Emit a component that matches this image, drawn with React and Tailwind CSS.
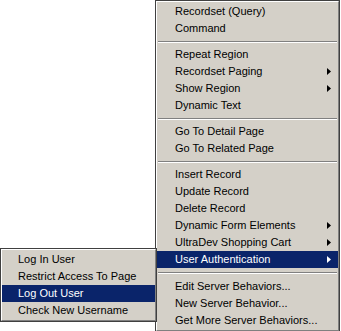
const mainGroups = [
  [{ label: 'Recordset (Query)' }, { label: 'Command' }],
  [
    { label: 'Repeat Region' },
    { label: 'Recordset Paging', sub: true },
    { label: 'Show Region', sub: true },
    { label: 'Dynamic Text' },
  ],
  [{ label: 'Go To Detail Page' }, { label: 'Go To Related Page' }],
  [
    { label: 'Insert Record' },
    { label: 'Update Record' },
    { label: 'Delete Record' },
    { label: 'Dynamic Form Elements', sub: true },
    { label: 'UltraDev Shopping Cart', sub: true },
    { label: 'User Authentication', sub: true, active: true },
  ],
  [
    { label: 'Edit Server Behaviors...' },
    { label: 'New Server Behavior...' },
    { label: 'Get More Server Behaviors...' },
  ],
]

const authItems = [
  { label: 'Log In User' },
  { label: 'Restrict Access To Page' },
  { label: 'Log Out User', active: true },
  { label: 'Check New Username' },
]

function Arrow({ active }) {
  return (
    <svg width="4" height="7" viewBox="0 0 4 7" className="shrink-0">
      <path d="M0 0 L4 3.5 L0 7 Z" fill={active ? '#ffffff' : '#000000'} />
    </svg>
  )
}

function Item({ item, pad }) {
  return (
    <div
      className={`flex h-[17px] items-center pr-[7px] ${pad} ${item.active ? 'bg-[#0a246a] text-white' : 'text-black'}`}
    >
      <span className="flex-1 whitespace-nowrap">{item.label}</span>
      {item.sub && <Arrow active={item.active} />}
    </div>
  )
}

function Separator({ h }) {
  return (
    <div className={`flex ${h} flex-col justify-center px-px`}>
      <div className="h-px bg-[#808080]" />
      <div className="h-px bg-white" />
    </div>
  )
}

export default function App() {
  return (
    <div
      className="relative h-[331px] w-[341px] overflow-hidden bg-white text-[11px] leading-none"
      style={{ fontFamily: '"Liberation Sans", Arial, sans-serif' }}
    >
      <div className="ml-[155px] w-[185px] border border-[#404040] bg-[#d4d0c8]">
        <div className="border-t border-l border-white border-r border-b border-r-[#808080] border-b-[#808080] pt-px pb-px">
          {mainGroups.map((group, gi) => (
            <div key={gi}>
              {gi > 0 && <Separator h={gi === 4 ? 'h-[10px]' : 'h-[9px]'} />}
              {group.map((item) => (
                <Item key={item.label} item={item} pad="pl-[18px]" />
              ))}
            </div>
          ))}
        </div>
      </div>

      <div className="absolute left-0 top-[248px] w-[157px] border border-[#404040] bg-[#d4d0c8]">
        <div className="border-t border-l border-white border-r border-b border-r-[#808080] border-b-[#808080] py-px">
          {authItems.map((item) => (
            <Item key={item.label} item={item} pad="pl-[16px]" />
          ))}
        </div>
      </div>
    </div>
  )
}
